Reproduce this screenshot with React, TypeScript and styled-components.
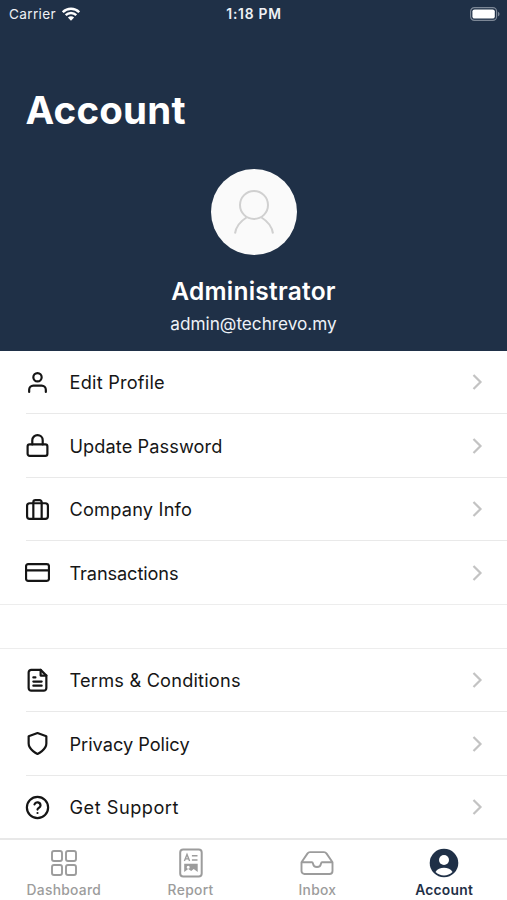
import React from 'react';
import styled, { createGlobalStyle } from 'styled-components';

const GlobalStyle = createGlobalStyle`
  * { box-sizing: border-box; }
  body { margin: 0; background: #fff; }
`;

const Screen = styled.main`
  width: 507px;
  height: 900px;
  display: flex;
  flex-direction: column;
  overflow: hidden;
  background: #fff;
  color: #161616;
  font-family: Inter, 'Liberation Sans', sans-serif;
`;

const Header = styled.header`
  flex: none;
  height: 350.5px;
  display: flex;
  flex-direction: column;
  align-items: center;
  background: #1f3047;
  color: #fff;
`;

const StatusBar = styled.div`
  width: 100%;
  height: 28px;
  display: grid;
  grid-template-columns: 1fr auto 1fr;
  align-items: center;
  padding: 0 7px 0 9px;
  font: 400 13.6px/28px Inter, sans-serif;
  color: #eef1f5;
`;

const Carrier = styled.div`
  display: flex;
  align-items: center;
  gap: 6px;
  letter-spacing: 0.35px;
`;

const Clock = styled.div`
  margin-right: 1px;
  font-weight: 600;
  font-size: 13.8px;
  letter-spacing: 0.75px;
`;

const Battery = styled.svg`
  justify-self: end;
`;

const Title = styled.h1`
  align-self: flex-start;
  margin: 57.5px 0 0 25.5px;
  font-size: 38.5px;
  line-height: 48px;
  font-weight: 650;
  letter-spacing: 0.2px;
`;

const Avatar = styled.div`
  width: 86px;
  height: 86px;
  margin-top: 35.5px;
  border-radius: 50%;
  background: #fafafa;
`;

const Name = styled.h2`
  margin: 19.5px 0 0;
  font-size: 24.5px;
  line-height: 32px;
  font-weight: 600;
  letter-spacing: 0.25px;
`;

const Email = styled.p`
  margin: 5.5px 0 0;
  font-size: 17.2px;
  line-height: 24px;
  letter-spacing: 0;
  color: #eef2f8;
`;

const Group = styled.ul`
  flex: none;
  list-style: none;
  margin: 0;
  padding: 0;
`;

const Gap = styled.div`
  flex: none;
  height: 45px;
  border-top: 1px solid #ededed;
  border-bottom: 1px solid #ededed;
  margin-top: -1px;
`;

const Row = styled.li`
  height: 63.5px;
  display: flex;
  align-items: center;
  padding: 0 18px 0 25px;
  background: linear-gradient(#e9e9e9, #e9e9e9) 26px 100% / 100% 1px no-repeat;
  &:last-child { background: none; }
`;

const RowLabel = styled.span<{ $spacing: number }>`
  flex: 1;
  margin-left: 19.5px;
  font-size: 18.2px;
  line-height: 26px;
  letter-spacing: ${p => p.$spacing}px;
`;

const LineIcon = styled.svg`
  flex: none;
  width: 25px;
  height: 25px;
  fill: none;
  stroke: #151515;
  stroke-width: 2.1;
  stroke-linecap: round;
  stroke-linejoin: round;
`;

const Chevron = styled.svg`
  flex: none;
  fill: none;
  stroke: #c3c3c3;
  stroke-width: 2.2;
`;

const TabBar = styled.nav`
  flex: none;
  height: 62px;
  margin-top: -1px;
  display: grid;
  grid-template-columns: repeat(4, 1fr);
  border-top: 2px solid #e8e8e8;
  background: #fff;
`;

const Tab = styled.div<{ $active?: boolean; $spacing: number }>`
  display: flex;
  flex-direction: column;
  align-items: center;
  padding: 6.5px 0 0 1px;
  color: ${p => (p.$active ? '#1f3047' : '#9c9c9c')};
  font-size: 13.8px;
  font-weight: ${p => (p.$active ? 600 : 500)};
  line-height: 20px;
  letter-spacing: ${p => p.$spacing}px;
  svg { margin-bottom: 1px; }
`;

const drawings = {
  user: <><path d="M20 21v-2a4 4 0 0 0-4-4H8a4 4 0 0 0-4 4v2" /><circle cx="12" cy="7" r="4" /></>,
  lock: <><rect x="2.5" y="11" width="19" height="11" rx="2" /><path d="M7 11V7a5 5 0 0 1 10 0v4" /></>,
  briefcase: <><rect x="2" y="6" width="20" height="15" rx="2.5" /><path d="M16 21V5a2 2 0 0 0-2-2h-4a2 2 0 0 0-2 2v16" /></>,
  card: <><rect x="1" y="4" width="22" height="16" rx="2" /><path d="M1 10h22" /></>,
  document: <><path d="M15 1.800H6A2.500 2.500 0 0 0 3.500 4.300v15A2.500 2.500 0 0 0 6 21.800h12a2.500 2.500 0 0 0 2.500-2.500V7.300Z" /><path d="M15 1.800v5.500h5.500M8 9h2M8 13h8M8 17h8" /></>,
  shield: <path d="M12 22s8.500-4 8.500-10V5L12 2 3.500 5v7c0 6 8.500 10 8.500 10Z" />,
  help: <><circle cx="12" cy="12" r="10.200" /><path d="M9.100 9a3 3 0 0 1 5.800 1c0 2-2.900 2.600-2.900 4M12 17.300h.01" /></>,
};

type Item = { icon: keyof typeof drawings; label: string; spacing: number };

const accountItems: Item[] = [
  { icon: 'user', label: 'Edit Profile', spacing: 0.22 },
  { icon: 'lock', label: 'Update Password', spacing: 0.08 },
  { icon: 'briefcase', label: 'Company Info', spacing: 0.2 },
  { icon: 'card', label: 'Transactions', spacing: -0.12 },
];

const helpItems: Item[] = [
  { icon: 'document', label: 'Terms & Conditions', spacing: 0.2 },
  { icon: 'shield', label: 'Privacy Policy', spacing: -0.02 },
  { icon: 'help', label: 'Get Support', spacing: 0.5 },
];

const MenuGroup = ({ items }: { items: Item[] }) => (
  <Group>
    {items.map(({ icon, label, spacing }) => (
      <Row key={label}>
        <LineIcon viewBox="0 0 24 24">{drawings[icon]}</LineIcon>
        <RowLabel $spacing={spacing}>{label}</RowLabel>
        <Chevron width="17" height="16" viewBox="0 0 17 16"><path d="m1.500 1 7 7-7 7" /></Chevron>
      </Row>
    ))}
  </Group>
);

export default function App() {
  return (
    <Screen>
      <GlobalStyle />
      <Header>
        <StatusBar>
          <Carrier>
            Carrier
            <svg width="18" height="14" viewBox="0 0 18 14" fill="none" stroke="#fff" strokeWidth="2.400">
              <path d="M.8 5.200C5.400.6 12.600.6 17.200 5.200M3.700 8.200c3-2.900 7.600-2.900 10.600 0" />
              <path d="M9 13.700 5.900 10.600c1.700-1.700 4.500-1.700 6.200 0Z" fill="#fff" stroke="none" />
            </svg>
          </Carrier>
          <Clock>1:18 PM</Clock>
          <Battery width="30" height="14" viewBox="0 0 30 14">
            <rect x=".6" y=".6" width="26" height="12.800" rx="3.800" fill="none" stroke="#7c8796" strokeWidth="1.200" />
            <rect x="2.400" y="2.400" width="22.400" height="9.200" rx="2.200" fill="#fff" />
            <path d="M28 4.700c2 .8 2 3.800 0 4.600Z" fill="#7c8796" />
          </Battery>
        </StatusBar>
        <Title>Account</Title>
        <Avatar>
          <svg width="86" height="86" viewBox="0 0 86 86" fill="none" stroke="#d0d0d0" strokeWidth="2">
            <circle cx="43" cy="36" r="14" />
            <path d="M24 64.500c1-7 5-12 11.500-16M62 64.500c-1-7-5-12-11.500-16" />
          </svg>
        </Avatar>
        <Name>Administrator</Name>
        <Email>admin@techrevo.my</Email>
      </Header>
      <MenuGroup items={accountItems} />
      <Gap />
      <MenuGroup items={helpItems} />
      <TabBar>
        <Tab $spacing={0.3}>
          <svg width="32" height="32" viewBox="0 0 32 32" fill="none" stroke="currentColor" strokeWidth="1.900">
            <rect x="4" y="4" width="10" height="10" rx="2" /><rect x="18" y="4" width="10" height="10" rx="2" />
            <rect x="4" y="18" width="10" height="10" rx="2" /><rect x="18" y="18" width="10" height="10" rx="2" />
          </svg>
          Dashboard
        </Tab>
        <Tab $spacing={0.35}>
          <svg width="32" height="32" viewBox="0 0 32 32" fill="none" stroke="currentColor">
            <rect x="5.200" y="2.500" width="21.500" height="27" rx="3" strokeWidth="2" />
            <path d="m9.400 14 2.600-6.500 2.600 6.500M10.400 11.900h3.200M16.900 8.800h5.600M16.900 13h5.600" strokeWidth="1.400" />
            <path fill="currentColor" stroke="none" fillRule="evenodd" d="M9.200 16.800h13.500v8.200l-4-3-2.500 2-3-2-4 3ZM13.200 18.800a1.500 1.500 0 1 0 0 3 1.500 1.500 0 0 0 0-3Z" />
          </svg>
          Report
        </Tab>
        <Tab $spacing={0.3}>
          <svg width="34" height="32" viewBox="0 0 34 32" fill="none" stroke="currentColor" strokeWidth="1.900" strokeLinejoin="round">
            <path d="M1.500 15.200 7.400 6.600Q8.400 5.100 10 5.100h14q1.600 0 2.600 1.500l5.900 8.600v8.800a3 3 0 0 1-3 3h-25a3 3 0 0 1-3-3ZM1.500 15.200H12c.8 0 .8.800 1 1.400.6 4.500 7.400 4.500 8 0 .2-.6.2-1.400 1-1.400h10.500" />
          </svg>
          Inbox
        </Tab>
        <Tab $active $spacing={0.25}>
          <svg width="32" height="32" viewBox="0 0 32 32">
            <circle cx="16" cy="16" r="14.300" fill="currentColor" />
            <circle cx="16" cy="13" r="5" fill="#fff" />
            <path d="M7.500 25c3.200-5.600 13.800-5.600 17 0-4.500 4.600-12.500 4.600-17 0Z" fill="#fff" />
          </svg>
          Account
        </Tab>
      </TabBar>
    </Screen>
  );
}
